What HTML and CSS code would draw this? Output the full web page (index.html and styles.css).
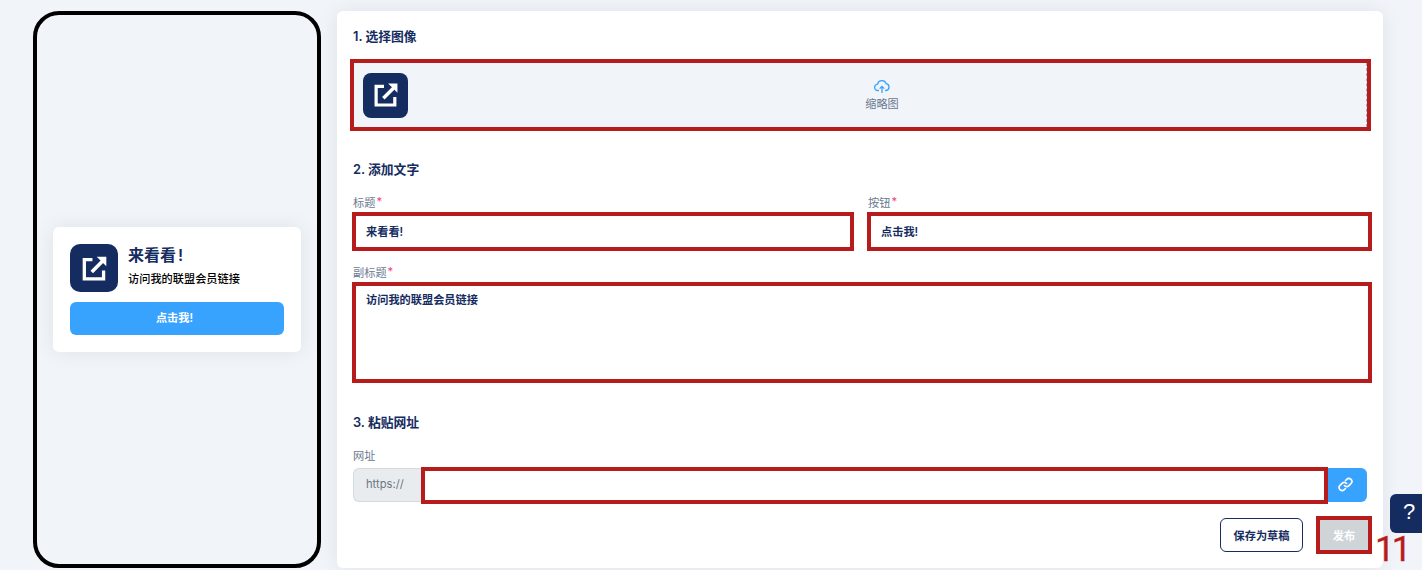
FILE: index.html
```html
<!DOCTYPE html>
<html lang="zh-CN">
<head>
    <meta charset="UTF-8">
    <title>发布</title>
    <link rel="stylesheet" href="styles.css">
</head>
<body>
    <div class="page">
        <div class="phone">
            <div class="card">
                <div class="card-head">
                    <div class="logo">
                        <svg viewBox="0 0 24 24" width="33" height="33"><path d="M10.5 5.5H4.6v14h14v-6" fill="none" stroke="#fff" stroke-width="2.4"/><path d="M10 14.5L19 5.5" fill="none" stroke="#fff" stroke-width="2.6"/><path d="M13.6 3.4h7v7z" fill="#fff"/></svg>
                    </div>
                    <div>
                        <div class="card-title">来看看<span class="bang">!</span></div>
                        <div class="card-sub">访问我的联盟会员链接</div>
                    </div>
                </div>
                <div class="card-btn">点击我!</div>
            </div>
        </div>
        <form class="panel" autocomplete="off">
            <div class="step">1. 选择图像</div>
            <div class="drop">
                <div class="logo">
                    <svg viewBox="0 0 24 24" width="32" height="32"><path d="M10.5 5.5H4.6v14h14v-6" fill="none" stroke="#fff" stroke-width="2.4"/><path d="M10 14.5L19 5.5" fill="none" stroke="#fff" stroke-width="2.6"/><path d="M13.6 3.4h7v7z" fill="#fff"/></svg>
                </div>
                <div class="drop-text">
                    <svg viewBox="0 0 16 16" width="16" height="16"><path d="M4.5 12.5H4A3.2 3.2 0 0 1 3.6 6.1 4.5 4.5 0 0 1 12.2 5.6 3.5 3.5 0 0 1 12 12.5h-.5" fill="none" stroke="#38a3ff" stroke-width="1.3" stroke-linecap="round"/><path d="M8 15V8.5M5.7 10.6L8 8.3l2.3 2.3" fill="none" stroke="#38a3ff" stroke-width="1.3"/></svg>
                    <span>缩略图</span>
                </div>
            </div>

            <div class="step step-2">2. 添加文字</div>
            <div class="row">
                <div class="field">
                    <label>标题<i>*</i></label>
                    <input class="box" type="text" value="来看看!">
                </div>
                <div class="field">
                    <label>按钮<i>*</i></label>
                    <input class="box" type="text" value="点击我!">
                </div>
            </div>
            <div class="field field-sub">
                <label>副标题<i>*</i></label>
                <textarea class="box area">访问我的联盟会员链接</textarea>
            </div>

            <div class="step step-3">3. 粘贴网址</div>
            <div class="field field-url">
                <label>网址</label>
                <div class="url-row">
                    <span class="prefix">https://</span>
                    <input class="box url" type="text">
                    <span class="link-btn">
                        <svg viewBox="0 0 24 24" width="17" height="17"><path d="M10.5 13.5a4 4 0 0 0 6 .4l3.2-3.2a4.2 4.2 0 0 0-6-6l-1.6 1.6" fill="none" stroke="#fff" stroke-width="2.3" stroke-linecap="round"/><path d="M13.5 10.5a4 4 0 0 0-6-.4l-3.2 3.2a4.2 4.2 0 0 0 6 6l1.6-1.6" fill="none" stroke="#fff" stroke-width="2.3" stroke-linecap="round"/></svg>
                    </span>
                </div>
            </div>
            <div class="actions">
                <button type="button" class="btn-draft">保存为草稿</button>
                <button type="button" class="btn-publish">发布</button>
            </div>
        </form>
    </div>
    <div class="help">?</div>
    <div class="mark">11</div>
</body>
</html>
```

FILE: styles.css
```css
html,body {
    height: 100%;
}
body {
    margin: 0;
    background: #f1f4f9;
    font-family: Inter,"Noto Sans CJK SC",sans-serif;
    color: #152c60;
    overflow: hidden;
    position: relative;
}
.page {
    display: flex;
    gap: 16px;
    height: 570px;
    box-sizing: border-box;
    padding: 11px 39px 2px 33px;
}

/* preview */
.phone {
    width: 288px;
    flex: none;
    box-sizing: border-box;
    border: 4px solid #000;
    border-radius: 26px;
    padding: 0 16px;
    display: flex;
    align-items: center;
}
.card {
    flex: 1;
    background: #fff;
    border-radius: 6px;
    padding: 17px;
    box-shadow: 0 0 20px rgba(0,0,0,.08);
}
.card-head {
    display: flex;
    gap: 10px;
    margin-bottom: 10px;
}
.logo {
    width: 48px;
    height: 48px;
    flex: none;
    background: #152c60;
    border-radius: 10px;
    display: flex;
    align-items: center;
    justify-content: center;
}
.card-title {
    font-size: 16px;
    line-height: 22px;
    font-weight: 600;
}
.bang {
    margin-left: 2px;
}
.card-sub {
    font-size: 11.2px;
    line-height: 16px;
    font-weight: 500;
    color: #000;
    margin-top: 5px;
}
.card-btn {
    background: #38a3ff;
    color: #fff;
    border-radius: 6px;
    font-size: 11.2px;
    font-weight: 600;
    line-height: 33px;
    text-align: center;
    padding-right: 5px;
}

/* form */
.panel {
    flex: 1;
    background: #fff;
    border-radius: 6px;
    padding: 17px 11px 0 15px;
    box-shadow: 0 0 20px rgba(0,0,0,.08);
}
.step {
    font-size: 12.8px;
    line-height: 18px;
    font-weight: 600;
    padding-left: 1px;
}
.step-2 {
    margin-top: 30px;
}
.step-3 {
    margin-top: 31px;
}
.drop {
    margin-top: 13px;
    margin-left: -2px;
    margin-right: 1px;
    height: 72px;
    box-sizing: border-box;
    border: 4px solid #b71c1c;
    background: #f1f4f9;
    display: flex;
    align-items: center;
    padding-left: 9px;
}
.drop .logo {
    width: 45px;
    height: 45px;
    border-radius: 8px;
}
.drop::after {
    content: "";
    align-self: stretch;
    margin-left: 10px;
    border-right: 1px dashed #a3afbd;
}
.drop-text {
    flex: 1;
    display: flex;
    flex-direction: column;
    align-items: center;
    gap: 3px;
    margin-top: -2px;
    font-size: 11.2px;
    line-height: 14px;
    color: #6b7a90;
}
.row {
    display: grid;
    grid-template-columns: 502px 505px;
    gap: 13px;
    margin-top: 17px;
}
.field label {
    display: block;
    font-size: 11.2px;
    line-height: 14px;
    color: #6b7a90;
    padding-left: 1px;
    margin-bottom: 2px;
}
.field label i {
    color: #f0447c;
    font-style: normal;
    margin-left: 1px;
    position: relative;
    top: -1px;
}
.field-sub {
    margin-top: 15px;
}
.field-url {
    margin-top: 17px;
}
.field-url label {
    margin-bottom: 4px;
}
.box {
    display: block;
    width: 100%;
    height: 39px;
    box-sizing: border-box;
    border: 4px solid #b71c1c;
    border-radius: 0;
    outline: none;
    padding: 0 10px 2px;
    background: #fff;
    font-family: inherit;
    font-size: 11.2px;
    font-weight: 600;
    color: #152c60;
}
.area {
    height: 101px;
    padding: 6px 10px;
    line-height: 16px;
    resize: none;
}
.url-row {
    display: flex;
    align-items: flex-start;
    margin-right: 5px;
    padding-left: 1px;
}
.prefix {
    width: 68px;
    height: 34px;
    flex: none;
    margin-top: 1px;
    box-sizing: border-box;
    border: 1px solid #d5dae0;
    border-right: none;
    border-radius: 6px 0 0 6px;
    background: #e9ecef;
    font-size: 11.2px;
    line-height: 30px;
    padding-left: 12px;
    color: #6c757d;
}
.url {
    flex: 1;
    width: auto;
    height: 37px;
    min-width: 0;
}
.link-btn {
    width: 39px;
    height: 34px;
    flex: none;
    margin-top: 1px;
    background: #38a3ff;
    border-radius: 0 6px 6px 0;
    display: flex;
    align-items: center;
    justify-content: center;
}
.link-btn svg {
    margin-left: -5px;
    margin-top: -1px;
}
.actions {
    display: flex;
    justify-content: flex-end;
    align-items: center;
    gap: 13px;
    margin-top: 12px;
}
.actions button {
    font-family: inherit;
    font-size: 11.2px;
    font-weight: 600;
    padding: 0;
}
.btn-draft {
    width: 83px;
    height: 34px;
    background: #fff;
    color: #152c60;
    border: 1px solid #152c60;
    border-radius: 6px;
}
.btn-publish {
    width: 56px;
    height: 38px;
    box-sizing: border-box;
    background: #ced4d8;
    color: #fff;
    border: 4px solid #b71c1c;
}

/* floating */
.help {
    position: absolute;
    left: 1390px;
    top: 494px;
    width: 32px;
    height: 39px;
    background: #152c60;
    border-radius: 6px 0 0 6px;
    color: #fff;
    font-family: "Liberation Sans",sans-serif;
    font-size: 22px;
    line-height: 35px;
    text-align: center;
    padding-left: 6px;
    box-sizing: border-box;
}
.mark {
    position: absolute;
    left: 1375px;
    top: 529px;
    font-family: Roboto,sans-serif;
    font-size: 35px;
    line-height: 41px;
    color: #b71c1c;
    letter-spacing: -3px;
    -webkit-text-stroke: .3px #b71c1c;
}
```
